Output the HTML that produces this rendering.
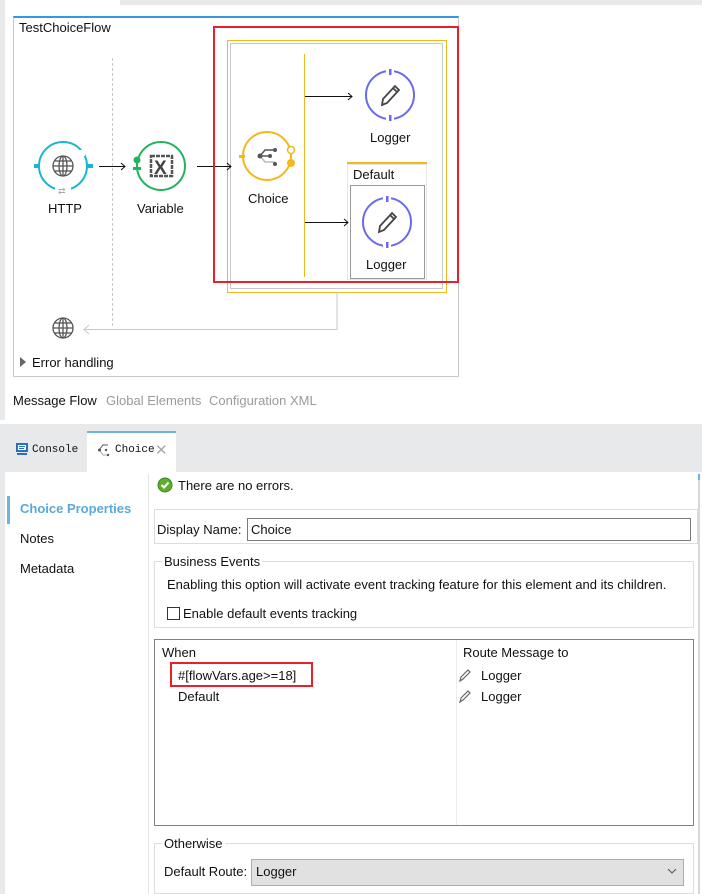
<!DOCTYPE html>
<html><head><meta charset="utf-8">
<style>
*{margin:0;padding:0;box-sizing:border-box}
body{width:702px;height:894px;position:relative;background:#fff;font-family:"Liberation Sans",sans-serif;font-size:13px;color:#111;overflow:hidden}
.a{position:absolute}
.t{position:absolute;white-space:nowrap;line-height:15px}
</style></head><body>
<div class="a" style="left:120px;top:0;width:582px;height:5px;background:#e8e9eb"></div>
<div class="a" style="left:0;top:0;width:5px;height:420px;background:#e8e9eb"></div>
<div class="a" style="left:13px;top:16px;width:446px;height:361px;border:1px solid #c8c8c8;border-top:2px solid #3a96dd"></div>
<div class="t" style="left:19px;top:20px">TestChoiceFlow</div>

<svg class="a" style="left:0;top:0" width="470" height="380">
 <line x1="112.5" y1="58" x2="112.5" y2="328" stroke="#c8c8c8" stroke-dasharray="3,2"/>
 <rect x="227.5" y="40.5" width="219" height="252" fill="none" stroke="#f2b81e"/>
 <rect x="230.5" y="43.5" width="212" height="245" fill="none" stroke="#c8c8c8"/>
 <line x1="304.5" y1="54" x2="304.5" y2="277" stroke="#f2b81e"/>
 <rect x="347" y="162" width="80" height="2" fill="#f2b81e"/>
 <rect x="347.5" y="164.5" width="79" height="115" fill="none" stroke="#e6e6e6"/>
 <rect x="350.5" y="185.5" width="74" height="93" fill="none" stroke="#999"/>
 <polyline points="337,292 337,329.5 84,329.5" fill="none" stroke="#c8c8c8"/>
 <polyline points="89,325 84,329.5 89,334" fill="none" stroke="#c8c8c8"/>
 <g stroke="#111" fill="none" stroke-width="1">
  <line x1="99" y1="166.5" x2="125" y2="166.5"/><polyline points="121,163 125,166.5 121,170"/>
  <line x1="197" y1="166.5" x2="231" y2="166.5"/><polyline points="227,163 231,166.5 227,170"/>
  <line x1="305" y1="96.5" x2="352" y2="96.5"/><polyline points="348,93 352,96.5 348,100"/>
  <line x1="305" y1="222.5" x2="348" y2="222.5"/><polyline points="344,219 348,222.5 344,226"/>
 </g>
 <circle cx="63" cy="166" r="24" fill="none" stroke="#1ab4d6" stroke-width="2"/>
 <rect x="55" y="184" width="16" height="10" fill="#fff"/>
 <rect x="79" y="150" width="6" height="6" fill="#fff"/>
 <rect x="34" y="164" width="6" height="4" fill="#1ab4d6"/><rect x="87" y="164" width="6" height="4" fill="#1ab4d6"/>
 <g stroke="#555" fill="none" stroke-width="1.3"><circle cx="63" cy="166" r="10"/><ellipse cx="63" cy="166" rx="4" ry="10"/><line x1="53" y1="166" x2="73" y2="166"/><line x1="55" y1="161" x2="71" y2="161"/><line x1="55" y1="171" x2="71" y2="171"/><line x1="63" y1="156" x2="63" y2="176"/></g>
 <text x="58" y="194" font-size="9" fill="#aaa" font-family="Liberation Sans">⇄</text>
 <circle cx="161" cy="166" r="24" fill="none" stroke="#22b35e" stroke-width="2"/>
 <circle cx="137" cy="160" r="3.5" fill="#22b35e"/><rect x="133" y="167" width="8" height="3" fill="#22b35e"/>
 <rect x="151" y="156" width="21" height="20" fill="#fff" stroke="#555" stroke-width="2.5" stroke-dasharray="4,1"/>
 <text x="154" y="174" font-size="19" font-weight="bold" fill="#444" font-family="Liberation Sans">X</text>
 <circle cx="267" cy="156" r="24" fill="none" stroke="#f2b81e" stroke-width="2"/>
 <rect x="239" y="155" width="6" height="3" fill="#f2b81e"/>
 <circle cx="291" cy="150" r="3.5" fill="#fff" stroke="#f2b81e" stroke-width="1.5"/>
 <circle cx="291" cy="163" r="4" fill="#f2b81e"/>
 <polyline points="260,156 265,150 275,150" fill="none" stroke="#555" stroke-width="1.5"/>
 <polyline points="260,156 265,162 275,162" fill="none" stroke="#bbb" stroke-width="1.5"/>
 <line x1="260" y1="156" x2="270" y2="156" stroke="#555" stroke-width="1.5"/>
 <circle cx="260" cy="156" r="2.5" fill="#555"/><circle cx="275" cy="150" r="2" fill="#555"/><circle cx="270" cy="156" r="2" fill="#555"/><circle cx="275" cy="164" r="2" fill="#555"/>
 <g>
 <circle cx="390" cy="95" r="24" fill="none" stroke="#6a6af0" stroke-width="2"/>
 <rect x="386" y="68" width="8" height="6" fill="#fff"/><rect x="386" y="116" width="8" height="6" fill="#fff"/>
 <rect x="389" y="69" width="2.5" height="6" fill="#6a6af0"/><rect x="389" y="115" width="2.5" height="6" fill="#6a6af0"/>
 <path d="M382 105 L383 99 L395 86 L399 90 L387 103 Z M393 88 L397 92" fill="none" stroke="#444" stroke-width="1.8"/>
 </g>
 <g transform="translate(-3,127)">
 <circle cx="390" cy="95" r="24" fill="none" stroke="#6a6af0" stroke-width="2"/>
 <rect x="386" y="68" width="8" height="6" fill="#fff"/><rect x="386" y="116" width="8" height="6" fill="#fff"/>
 <rect x="389" y="69" width="2.5" height="6" fill="#6a6af0"/><rect x="389" y="115" width="2.5" height="6" fill="#6a6af0"/>
 <path d="M382 105 L383 99 L395 86 L399 90 L387 103 Z M393 88 L397 92" fill="none" stroke="#444" stroke-width="1.8"/>
 </g>
 <rect x="214" y="27" width="244" height="255" fill="none" stroke="#e8202a" stroke-width="2"/>
 <g stroke="#555" fill="none" stroke-width="1.3"><circle cx="63" cy="328" r="10"/><ellipse cx="63" cy="328" rx="4" ry="10"/><line x1="53" y1="328" x2="73" y2="328"/><line x1="55" y1="323" x2="71" y2="323"/><line x1="55" y1="333" x2="71" y2="333"/><line x1="63" y1="318" x2="63" y2="338"/></g>
 <polygon points="20,357 26,362 20,367" fill="#666"/>
</svg>
<div class="t" style="left:48px;top:201px">HTTP</div>
<div class="t" style="left:137px;top:201px">Variable</div>
<div class="t" style="left:248px;top:191px">Choice</div>
<div class="t" style="left:370px;top:130px">Logger</div>
<div class="t" style="left:353px;top:167px">Default</div>
<div class="t" style="left:366px;top:257px">Logger</div>
<div class="t" style="left:32px;top:355px">Error handling</div>
<div class="t" style="left:13px;top:393px">Message Flow</div>
<div class="t" style="left:106px;top:393px;color:#9a9a9a">Global Elements</div>
<div class="t" style="left:209px;top:393px;color:#9a9a9a">Configuration XML</div>

<div class="a" style="left:0;top:424px;width:702px;height:48px;background:#e8e9eb"></div>
<div class="a" style="left:0;top:472px;width:5px;height:422px;background:#e8e9eb"></div>
<div class="a" style="left:87px;top:431px;width:89px;height:42px;background:#fff;border-top:2px solid #6ab4de"></div>
<svg class="a" style="left:15px;top:442px" width="14" height="14"><rect x="1" y="1" width="12" height="9" fill="#2c6fbf"/><rect x="3" y="3" width="8" height="5" fill="#fff"/><rect x="4" y="4" width="6" height="1" fill="#2c6fbf"/><rect x="4" y="6" width="5" height="1" fill="#2c6fbf"/><rect x="2" y="11" width="10" height="2" fill="#2c6fbf"/></svg>
<div class="t" style="left:32px;top:443px;font-family:'Liberation Mono',monospace;font-size:11px">Console</div>
<svg class="a" style="left:97px;top:443px" width="14" height="14"><polyline points="2,7 6,2 11,2" fill="none" stroke="#555"/><polyline points="2,7 6,12 11,12" fill="none" stroke="#aaa"/><circle cx="2.5" cy="7" r="1.5" fill="#555"/><circle cx="9" cy="7" r="1.2" fill="#555"/><circle cx="11" cy="12" r="1.2" fill="#555"/></svg>
<div class="t" style="left:115px;top:443px;font-family:'Liberation Mono',monospace;font-size:11px">Choice</div>
<div class="t" style="left:155px;top:443px;color:#aaa;font-size:15px">✕</div>

<div class="a" style="left:148px;top:474px;width:1px;height:420px;background:#e3e3e3"></div>
<div class="a" style="left:7px;top:496px;width:3px;height:28px;background:#6ab4de"></div>
<div class="t" style="left:20px;top:501px;color:#5aa9d9;font-weight:bold">Choice Properties</div>
<div class="t" style="left:20px;top:531px">Notes</div>
<div class="t" style="left:20px;top:561px">Metadata</div>
<div class="a" style="left:698px;top:474px;width:2px;height:420px;background:#d8d8d8"></div>
<div class="a" style="left:698px;top:474px;width:2px;height:6px;background:#6ab4de"></div>

<svg class="a" style="left:157px;top:477px" width="16" height="16"><circle cx="8" cy="8" r="7" fill="#5cae2c" stroke="#3d8a1a"/><polyline points="4.5,8 7,10.5 11.5,5.5" fill="none" stroke="#fff" stroke-width="2"/></svg>
<div class="t" style="left:178px;top:478px">There are no errors.</div>

<div class="a" style="left:154px;top:509px;width:544px;height:35px;border:1px solid #dcdcdc"></div>
<div class="t" style="left:157px;top:522px">Display Name:</div>
<div class="a" style="left:247px;top:518px;width:444px;height:23px;border:1px solid #7a7a7a"></div>
<div class="t" style="left:251px;top:522px">Choice</div>

<div class="a" style="left:154px;top:561px;width:540px;height:67px;border:1px solid #dcdcdc"></div>
<div class="t" style="left:162px;top:554px;background:#fff;padding:0 2px">Business Events</div>
<div class="t" style="left:167px;top:577px">Enabling this option will activate event tracking feature for this element and its children.</div>
<div class="a" style="left:167px;top:607px;width:13px;height:13px;border:1px solid #333"></div>
<div class="t" style="left:183px;top:606px">Enable default events tracking</div>

<div class="a" style="left:154px;top:639px;width:540px;height:187px;border:1px solid #828282"></div>
<div class="a" style="left:456px;top:640px;width:1px;height:185px;background:#ececec"></div>
<div class="t" style="left:162px;top:645px">When</div>
<div class="t" style="left:463px;top:645px">Route Message to</div>
<div class="a" style="left:170px;top:662px;width:143px;height:25px;border:2px solid #e8202a"></div>
<div class="t" style="left:178px;top:668px">#[flowVars.age&gt;=18]</div>
<div class="t" style="left:178px;top:689px">Default</div>
<svg class="a" style="left:458px;top:668px" width="14" height="36"><path d="M2 13 L3 9 L10 2 L12 4 L5 11 Z" fill="none" stroke="#666" stroke-width="1.2"/><path d="M2 34 L3 30 L10 23 L12 25 L5 32 Z" fill="none" stroke="#666" stroke-width="1.2"/></svg>
<div class="t" style="left:481px;top:668px">Logger</div>
<div class="t" style="left:481px;top:689px">Logger</div>

<div class="a" style="left:154px;top:843px;width:540px;height:51px;border:1px solid #dcdcdc"></div>
<div class="t" style="left:162px;top:836px;background:#fff;padding:0 2px">Otherwise</div>
<div class="t" style="left:164px;top:864px">Default Route:</div>
<div class="a" style="left:251px;top:859px;width:433px;height:27px;background:#e1e1e1;border:1px solid #adadad"></div>
<div class="t" style="left:256px;top:864px">Logger</div>
<svg class="a" style="left:667px;top:866px" width="10" height="10"><polyline points="1,3 5,7 9,3" fill="none" stroke="#555"/></svg>
</body></html>
